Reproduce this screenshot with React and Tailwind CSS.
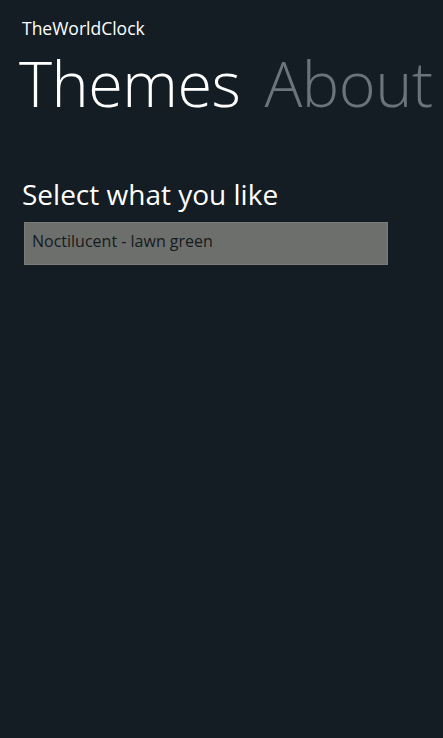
import React from 'react';

const App = () => {
  return (
    <div
      className="w-[443px] h-[738px] bg-[#131d23] overflow-hidden text-white"
      style={{ fontFamily: '"Open Sans", "Noto Sans", sans-serif' }}
    >
      <div className="pl-[22px] pt-[17px] text-[17.5px] leading-[22px]">TheWorldClock</div>

      {/* pivot headers */}
      <div className="flex items-baseline gap-[24px] pl-[19px] mt-[11px] whitespace-nowrap text-[63px] leading-[66px] font-light tracking-[-0.5px]">
        <span>Themes</span>
        <span className="text-[#6a757b]">About</span>
      </div>

      <div className="pl-[22px] mt-[59px]">
        <h2 className="text-[28px] leading-[38px]">Select what you like</h2>
        <div className="mt-[9px] ml-[2px] w-[364px] h-[43px] bg-[#6d6f6c] border border-[#7a7c79] flex items-center pl-[7px] pb-[6px]">
          <span className="text-[16px] text-[#151a1d]">Noctilucent - lawn green</span>
        </div>
      </div>
    </div>
  );
};

export default App;
